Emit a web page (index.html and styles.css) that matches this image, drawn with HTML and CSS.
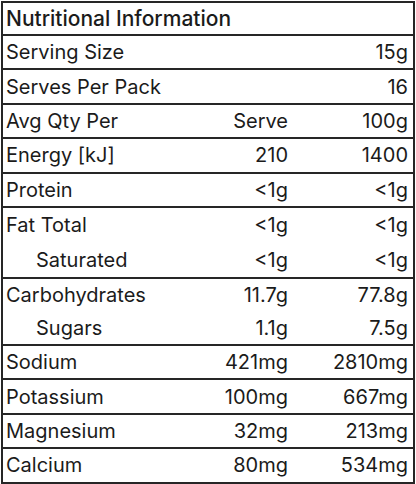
FILE: index.html
```html
<!DOCTYPE html>
<html>
<head>
<meta charset="utf-8">
<link rel="stylesheet" href="styles.css">
</head>
<body>
<div class="panel">
  <div class="row head"><span class="lbl">Nutritional Information</span></div>
  <div class="row"><span class="lbl">Serving Size</span><span></span><span class="val">15g</span></div>
  <div class="row"><span class="lbl">Serves Per Pack</span><span></span><span class="val">16</span></div>
  <div class="row"><span class="lbl">Avg Qty Per</span><span class="val">Serve</span><span class="val">100g</span></div>
  <div class="row"><span class="lbl">Energy [kJ]</span><span class="val">210</span><span class="val">1400</span></div>
  <div class="row"><span class="lbl">Protein</span><span class="val">&lt;1g</span><span class="val">&lt;1g</span></div>
  <div class="group fat">
    <div class="sub"><span class="lbl">Fat Total</span><span class="val">&lt;1g</span><span class="val">&lt;1g</span></div>
    <div class="sub"><span class="lbl ind">Saturated</span><span class="val">&lt;1g</span><span class="val">&lt;1g</span></div>
  </div>
  <div class="group carb">
    <div class="sub"><span class="lbl">Carbohydrates</span><span class="val">11.7g</span><span class="val">77.8g</span></div>
    <div class="sub"><span class="lbl ind">Sugars</span><span class="val">1.1g</span><span class="val">7.5g</span></div>
  </div>
  <div class="row"><span class="lbl">Sodium</span><span class="val">421mg</span><span class="val">2810mg</span></div>
  <div class="row"><span class="lbl">Potassium</span><span class="val">100mg</span><span class="val">667mg</span></div>
  <div class="row"><span class="lbl">Magnesium</span><span class="val">32mg</span><span class="val">213mg</span></div>
  <div class="row last"><span class="lbl">Calcium</span><span class="val">80mg</span><span class="val">534mg</span></div>
</div>
</body>
</html>
```

FILE: styles.css
```css
html, body {
  margin: 0;
  padding: 0;
  background: #ffffff;
}
body {
  font-family: Inter, "Liberation Sans", sans-serif;
  font-size: 20px;
  color: #1b1b1b;
}
.panel {
  box-sizing: border-box;
  width: 414px;
  margin: 1px 0 0 1px;
  border: 2px solid #262626;
}
.row, .sub {
  display: grid;
  grid-template-columns: 1fr 110px 120px;
  align-items: center;
  padding: 0 5px 0 3px;
}
.row {
  height: 32.4px;
  border-bottom: 2px solid #262626;
}
.row.last {
  border-bottom: 0;
}
.row.head {
  height: 31px;
  font-size: 21px;
  font-weight: 500;
}
.group {
  border-bottom: 2px solid #262626;
}
.fat .sub {
  height: 34.5px;
}
.carb .sub {
  height: 32.5px;
}
.lbl {
  white-space: nowrap;
}
.ind {
  padding-left: 30px;
}
.val {
  text-align: right;
  white-space: nowrap;
}
```
